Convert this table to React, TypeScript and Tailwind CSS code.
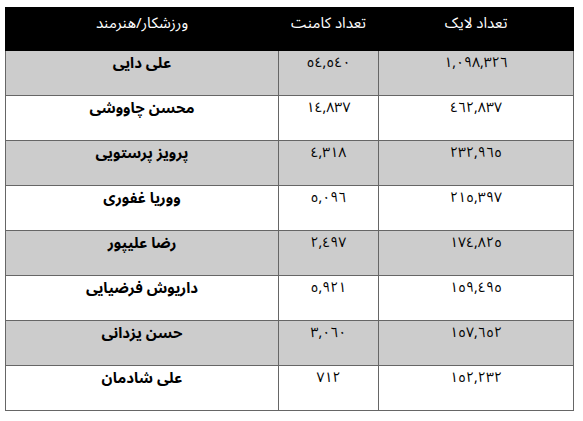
import React from "react";

const rows = [
  { name: "علی دایی", comments: "٥٤,٥٤٠", likes: "١,٠٩٨,٣٢٦" },
  { name: "محسن چاووشی", comments: "١٤,٨٣٧", likes: "٤٦٢,٨٣٧" },
  { name: "پرویز پرستویی", comments: "٤,٣١٨", likes: "٢٣٢,٩٦٥" },
  { name: "ووریا غفوری", comments: "٥,٠٩٦", likes: "٢١٥,٣٩٧" },
  { name: "رضا علیپور", comments: "٢,٤٩٧", likes: "١٧٤,٨٢٥" },
  { name: "داریوش فرضیایی", comments: "٥,٩٢١", likes: "١٥٩,٤٩٥" },
  { name: "حسن یزدانی", comments: "٣,٠٦٠", likes: "١٥٧,٦٥٢" },
  { name: "علی شادمان", comments: "٧١٢", likes: "١٥٢,٢٣٢" },
];

export default function App() {
  return (
    <div className="w-[583px] h-[421px] bg-white pt-[7px] pl-[5px] font-['Noto_Sans_Arabic','Noto_Naskh_Arabic','DejaVu_Sans',sans-serif]">
      <table dir="rtl" className="table-fixed border-collapse w-[568px] text-[15px] text-black">
        <colgroup>
          <col className="w-[195px]" />
          <col className="w-[100px]" />
          <col className="w-[273px]" />
        </colgroup>
        <thead>
          <tr className="bg-black text-white h-[43px]">
            <th className="font-normal align-top pt-[5px] leading-[20px] border border-black">تعداد لایک</th>
            <th className="font-normal align-top pt-[5px] leading-[20px] border border-black">تعداد کامنت</th>
            <th className="font-normal align-top pt-[5px] leading-[20px] border border-black">ورزشکار/هنرمند</th>
          </tr>
        </thead>
        <tbody>
          {rows.map((r, i) => (
            <tr key={i} className={i % 2 === 0 ? "bg-[#cccccc] h-[45px]" : "bg-white h-[45px]"}>
              <td className="border border-[#666666] text-center align-top pt-[2px] leading-[20px] text-[14px] tracking-[-1px]">{r.likes}</td>
              <td className="border border-[#666666] text-center align-top pt-[2px] leading-[20px] text-[14px] tracking-[-1px]">{r.comments}</td>
              <td className="border border-[#666666] text-center align-top pt-[2px] leading-[20px] font-bold">{r.name}</td>
            </tr>
          ))}
        </tbody>
      </table>
    </div>
  );
}
